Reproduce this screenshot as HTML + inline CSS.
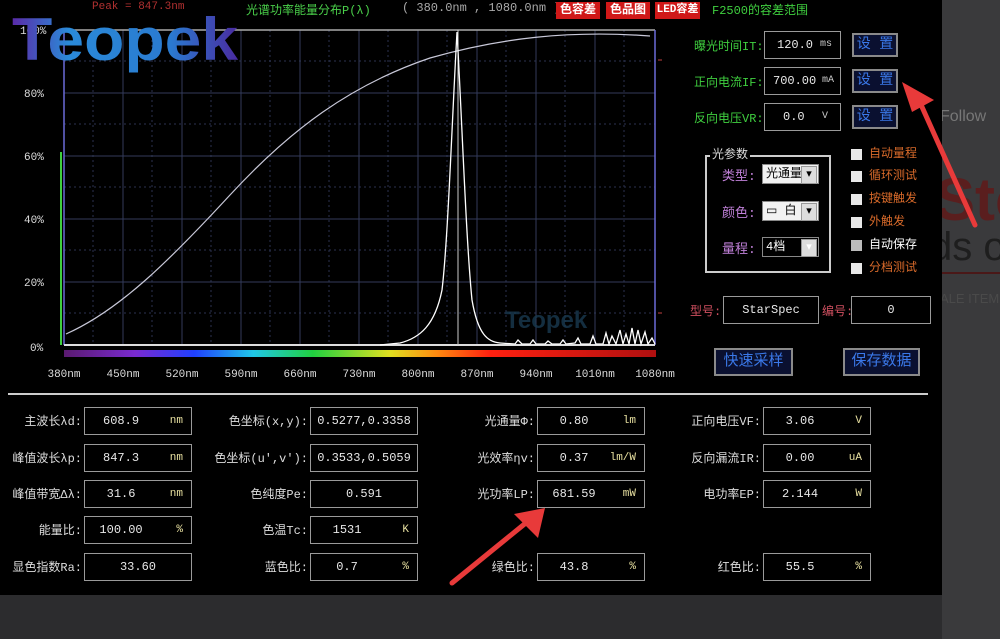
<!DOCTYPE html>
<html><head><meta charset="utf-8"><style>
*{margin:0;padding:0;box-sizing:border-box}
body{width:1000px;height:639px;background:#2c2c2e;position:relative;overflow:hidden;font-family:"Liberation Mono","Noto Sans CJK SC",monospace;font-size:12px}
.a{position:absolute;white-space:nowrap}
.panel{position:absolute;left:0;top:0;width:942px;height:595px;background:#000}
.lbl{position:absolute;color:#ddd;text-align:right;font-size:12px;line-height:16px}
.box{position:absolute;border:1.5px solid #9a9a9a;height:28px;color:#e8e8e8;font-size:12px;line-height:26px}
.box .v{position:absolute;left:0;top:0;width:68%;text-align:center}
.box .u{position:absolute;right:8px;top:0;color:#e8e0a0;font-size:11px}
.set{position:absolute;width:46px;height:24px;border:2px solid #8a8a8a;background:#0a1030;color:#3a78e8;font-size:14px;line-height:20px;text-align:center;white-space:nowrap}
.g{color:#3fcf3f}
.cb{position:absolute;width:11px;height:11px;background:#e8e8e8}
.cbl{position:absolute;color:#d86a2a;font-size:12px;line-height:14px}
.combo{position:absolute;width:57px;height:20px;background:#f2f2f2;color:#000;font-size:12px;line-height:19px;padding-left:3px;border:1px solid #888}
.combo:after{content:"▾";position:absolute;right:1px;top:1px;width:14px;height:16px;background:#ddd;font-size:11px;line-height:16px;text-align:center;border:1px solid #999}
.pl{position:absolute;color:#c080d8;font-size:13px}
</style></head><body>
<div class="a" style="left:942px;top:0;width:58px;height:639px;background:#3a3a3c"></div>
<div class="a" style="left:940px;top:108px;color:#777;font-family:'Liberation Sans',sans-serif;font-size:16px">Follow</div>
<div class="a" style="left:935px;top:165px;color:#5a1e1e;font-family:'Liberation Sans',sans-serif;font-size:60px;font-weight:bold">Sto</div>
<div class="a" style="left:930px;top:225px;color:#1e1e1e;font-family:'Liberation Sans',sans-serif;font-size:40px">ds o</div>
<div class="a" style="left:940px;top:272px;width:60px;height:2px;background:#4a1818"></div>
<div class="a" style="left:940px;top:291px;color:#4a4a4a;font-family:'Liberation Sans',sans-serif;font-size:13px">ALE ITEM</div>
<div class="panel"></div>
<!-- header -->
<div class="a" style="left:92px;top:1px;color:#b03030;font-size:11px">Peak = 847.3nm</div>
<div class="a g" style="left:246px;top:1px;font-size:12px;color:#4ad04a">光谱功率能量分布P(λ)</div>
<div class="a" style="left:402px;top:1px;color:#aaa;font-size:12px">( 380.0nm , 1080.0nm )</div>
<div class="a" style="left:556px;top:2px;width:44px;height:17px;background:#d01818;color:#fff;font-size:12px;line-height:17px;text-align:center;font-weight:bold">色容差</div>
<div class="a" style="left:606px;top:2px;width:44px;height:17px;background:#d01818;color:#fff;font-size:12px;line-height:17px;text-align:center;font-weight:bold">色品图</div>
<div class="a" style="left:655px;top:2px;width:45px;height:17px;background:#d01818;color:#fff;font-size:11px;line-height:17px;text-align:center;font-weight:bold">LED容差</div>
<div class="a g" style="left:712px;top:1px;font-size:12px">F2500的容差范围</div>
<!-- chart -->
<svg class="a" style="left:0;top:0" width="700" height="390">
<defs><linearGradient id="sp" x1="0" x2="1"><stop offset="0" stop-color="#5a1a70"/><stop offset=".12" stop-color="#7a2ad0"/><stop offset=".22" stop-color="#2040ff"/><stop offset=".32" stop-color="#20c8e8"/><stop offset=".42" stop-color="#20d040"/><stop offset=".55" stop-color="#e0e020"/><stop offset=".63" stop-color="#ff8a10"/><stop offset=".72" stop-color="#ff2010"/><stop offset="1" stop-color="#b01010"/></linearGradient></defs>
<g stroke="#2c3250" stroke-width="1" stroke-dasharray="2,3">
<line x1="64" y1="61" x2="655" y2="61"/><line x1="64" y1="124" x2="655" y2="124"/><line x1="64" y1="187" x2="655" y2="187"/><line x1="64" y1="250" x2="655" y2="250"/><line x1="64" y1="313" x2="655" y2="313"/>
<line x1="93" y1="30" x2="93" y2="345"/><line x1="152" y1="30" x2="152" y2="345"/><line x1="211" y1="30" x2="211" y2="345"/><line x1="270" y1="30" x2="270" y2="345"/><line x1="329" y1="30" x2="329" y2="345"/><line x1="388" y1="30" x2="388" y2="345"/><line x1="447" y1="30" x2="447" y2="345"/><line x1="506" y1="30" x2="506" y2="345"/><line x1="565" y1="30" x2="565" y2="345"/><line x1="624" y1="30" x2="624" y2="345"/>
</g>
<g stroke="#333a5a" stroke-width="1">
<line x1="64" y1="93" x2="655" y2="93"/><line x1="64" y1="156" x2="655" y2="156"/><line x1="64" y1="219" x2="655" y2="219"/><line x1="64" y1="282" x2="655" y2="282"/>
<line x1="123" y1="30" x2="123" y2="345"/><line x1="182" y1="30" x2="182" y2="345"/><line x1="241" y1="30" x2="241" y2="345"/><line x1="300" y1="30" x2="300" y2="345"/><line x1="359" y1="30" x2="359" y2="345"/><line x1="418" y1="30" x2="418" y2="345"/><line x1="477" y1="30" x2="477" y2="345"/><line x1="536" y1="30" x2="536" y2="345"/><line x1="595" y1="30" x2="595" y2="345"/>
</g>
<line x1="64" y1="30" x2="655" y2="30" stroke="#aaa" stroke-width="1.5"/>
<line x1="64" y1="30" x2="64" y2="345" stroke="#6a6ad8" stroke-width="1.5"/>
<line x1="655" y1="30" x2="655" y2="345" stroke="#6a6ad8" stroke-width="1.5"/>
<line x1="61" y1="152" x2="61" y2="345" stroke="#3fcf3f" stroke-width="2"/>
<line x1="64" y1="345" x2="655" y2="345" stroke="#ddd" stroke-width="2"/>
<line x1="458" y1="30" x2="458" y2="345" stroke="#ccc" stroke-width="1"/>
<line x1="658" y1="60" x2="662" y2="60" stroke="#c04040"/><line x1="658" y1="313" x2="662" y2="313" stroke="#c04040"/>
<path d="M66,334 C120,310 170,260 230,195 C290,130 350,85 430,58 C500,38 570,30 650,36" fill="none" stroke="#c8c8d8" stroke-width="1.2"/>
<path d="M380,345 L400,343 C420,338 435,325 442,290 C448,240 452,120 457,32 C462,120 466,240 472,300 C478,335 488,342 500,343 L515,344 518,340 522,344 530,344 533,340 536,344 545,344 548,341 552,344 560,344 563,340 566,344 575,343 578,338 581,344 590,344 593,336 596,344 603,344 606,333 609,344 612,336 616,344 620,330 623,344 626,334 629,344 632,328 635,344 638,330 641,344 645,332 648,344 652,338 655,344" fill="none" stroke="#fff" stroke-width="1.3"/>
<rect x="64" y="350" width="592" height="7" fill="url(#sp)"/>
<text x="505" y="328" fill="#1a3a50" font-family="Liberation Sans" font-size="24" font-weight="bold" opacity=".8">Teopek</text>
<g fill="#ddd" font-family="Liberation Mono" font-size="11">
<text x="20" y="34">100%</text><text x="24" y="97">80%</text><text x="24" y="160">60%</text><text x="24" y="223">40%</text><text x="24" y="286">20%</text><text x="30" y="351">0%</text>
</g>
<g fill="#ddd" font-family="Liberation Mono" font-size="11" text-anchor="middle">
<text x="64" y="377">380nm</text><text x="123" y="377">450nm</text><text x="182" y="377">520nm</text><text x="241" y="377">590nm</text><text x="300" y="377">660nm</text><text x="359" y="377">730nm</text><text x="418" y="377">800nm</text><text x="477" y="377">870nm</text><text x="536" y="377">940nm</text><text x="595" y="377">1010nm</text><text x="655" y="377">1080nm</text>
</g>
</svg>
<!-- logo -->
<svg class="a" style="left:8px;top:5px" width="240" height="75">
<defs><linearGradient id="lg" x1="0" x2="1"><stop offset="0" stop-color="#5a2aa8"/><stop offset=".25" stop-color="#2a8ad8"/><stop offset=".7" stop-color="#2a7ad0"/><stop offset="1" stop-color="#4a2aa0"/></linearGradient></defs>
<text x="4" y="55" fill="url(#lg)" font-family="Liberation Sans" font-size="60" font-weight="bold" textLength="226" lengthAdjust="spacingAndGlyphs">Teopek</text>
</svg>
<!-- right panel -->
<div class="a g" style="left:694px;top:37px;font-size:12px">曝光时间IT:</div>
<div class="box" style="left:764px;top:31px;width:77px"><span class="a" style="left:12px;color:#e8e8e8">120.0</span><span class="a" style="right:8px;font-size:10px;color:#ccc">ms</span></div>
<div class="set" style="left:852px;top:33px">设 置</div>
<div class="a g" style="left:694px;top:73px;font-size:12px">正向电流IF:</div>
<div class="box" style="left:764px;top:67px;width:77px"><span class="a" style="left:8px">700.00</span><span class="a" style="right:6px;font-size:10px;color:#ccc">mA</span></div>
<div class="set" style="left:852px;top:69px">设 置</div>
<div class="a g" style="left:694px;top:109px;font-size:12px">反向电压VR:</div>
<div class="box" style="left:764px;top:103px;width:77px"><span class="a" style="left:18px">0.0</span><span class="a" style="right:12px;font-size:10px;color:#ccc">V</span></div>
<div class="set" style="left:852px;top:105px">设 置</div>
<div class="a" style="left:705px;top:155px;width:126px;height:118px;border:2px solid #ccc"></div>
<div class="a" style="left:710px;top:145px;background:#000;color:#ddd;padding:0 2px;font-size:12px">光参数</div>
<div class="pl" style="left:722px;top:165px">类型:</div><div class="combo" style="left:762px;top:164px">光通量</div>
<div class="pl" style="left:722px;top:202px">颜色:</div><div class="combo" style="left:762px;top:201px">▭ 白</div>
<div class="pl" style="left:722px;top:238px">量程:</div><div class="combo" style="left:762px;top:237px;background:#000;color:#fff">4档</div>
<div class="cb" style="left:851px;top:149px"></div><div class="cbl" style="left:869px;top:147px">自动量程</div>
<div class="cb" style="left:851px;top:171px"></div><div class="cbl" style="left:869px;top:169px">循环测试</div>
<div class="cb" style="left:851px;top:194px"></div><div class="cbl" style="left:869px;top:192px">按键触发</div>
<div class="cb" style="left:851px;top:217px"></div><div class="cbl" style="left:869px;top:215px">外触发</div>
<div class="cb" style="left:851px;top:240px;background:#bbb"></div><div class="cbl" style="left:869px;top:238px;color:#fff">自动保存</div>
<div class="cb" style="left:851px;top:263px"></div><div class="cbl" style="left:869px;top:261px">分档测试</div>
<div class="a" style="left:690px;top:302px;color:#d05060;font-size:12px">型号:</div>
<div class="box" style="left:723px;top:296px;width:96px;text-align:center">StarSpec</div>
<div class="a" style="left:822px;top:302px;color:#d05060;font-size:12px">编号:</div>
<div class="box" style="left:851px;top:296px;width:80px;text-align:center">0</div>
<div class="set" style="left:714px;top:348px;width:79px;height:28px;line-height:24px;font-size:15px">快速采样</div>
<div class="set" style="left:843px;top:348px;width:77px;height:28px;line-height:24px;font-size:15px">保存数据</div>
<div class="a" style="left:8px;top:393px;width:920px;height:2px;background:#ccc"></div>
<!-- data grid -->
<div class="lbl" style="left:0;width:82px;top:414px">主波长λd:</div>
<div class="box" style="left:84px;top:407px;width:108px"><span class="v">608.9</span><span class="u">nm</span></div>
<div class="lbl" style="left:0;width:82px;top:451px">峰值波长λp:</div>
<div class="box" style="left:84px;top:444px;width:108px"><span class="v">847.3</span><span class="u">nm</span></div>
<div class="lbl" style="left:0;width:82px;top:487px">峰值带宽Δλ:</div>
<div class="box" style="left:84px;top:480px;width:108px"><span class="v">31.6</span><span class="u">nm</span></div>
<div class="lbl" style="left:0;width:82px;top:523px">能量比:</div>
<div class="box" style="left:84px;top:516px;width:108px"><span class="v">100.00</span><span class="u">%</span></div>
<div class="lbl" style="left:0;width:82px;top:560px">显色指数Ra:</div>
<div class="box" style="left:84px;top:553px;width:108px"><span class="v" style="width:100%">33.60</span></div>

<div class="lbl" style="left:180px;width:128px;top:414px">色坐标(x,y):</div>
<div class="box" style="left:310px;top:407px;width:108px;text-align:center">0.5277,0.3358</div>
<div class="lbl" style="left:180px;width:128px;top:451px">色坐标(u',v'):</div>
<div class="box" style="left:310px;top:444px;width:108px;text-align:center">0.3533,0.5059</div>
<div class="lbl" style="left:180px;width:128px;top:487px">色纯度Pe:</div>
<div class="box" style="left:310px;top:480px;width:108px;text-align:center">0.591</div>
<div class="lbl" style="left:180px;width:128px;top:523px">色温Tc:</div>
<div class="box" style="left:310px;top:516px;width:108px"><span class="v">1531</span><span class="u">K</span></div>
<div class="lbl" style="left:180px;width:128px;top:560px">蓝色比:</div>
<div class="box" style="left:310px;top:553px;width:108px"><span class="v">0.7</span><span class="u">%</span></div>

<div class="lbl" style="left:420px;width:115px;top:414px">光通量Φ:</div>
<div class="box" style="left:537px;top:407px;width:108px"><span class="v">0.80</span><span class="u">lm</span></div>
<div class="lbl" style="left:420px;width:115px;top:451px">光效率ηv:</div>
<div class="box" style="left:537px;top:444px;width:108px"><span class="v">0.37</span><span class="u">lm/W</span></div>
<div class="lbl" style="left:420px;width:115px;top:487px">光功率LP:</div>
<div class="box" style="left:537px;top:480px;width:108px"><span class="v">681.59</span><span class="u">mW</span></div>
<div class="lbl" style="left:420px;width:115px;top:560px">绿色比:</div>
<div class="box" style="left:537px;top:553px;width:108px"><span class="v">43.8</span><span class="u">%</span></div>

<div class="lbl" style="left:640px;width:121px;top:414px">正向电压VF:</div>
<div class="box" style="left:763px;top:407px;width:108px"><span class="v">3.06</span><span class="u">V</span></div>
<div class="lbl" style="left:640px;width:121px;top:451px">反向漏流IR:</div>
<div class="box" style="left:763px;top:444px;width:108px"><span class="v">0.00</span><span class="u">uA</span></div>
<div class="lbl" style="left:640px;width:121px;top:487px">电功率EP:</div>
<div class="box" style="left:763px;top:480px;width:108px"><span class="v">2.144</span><span class="u">W</span></div>
<div class="lbl" style="left:640px;width:121px;top:560px">红色比:</div>
<div class="box" style="left:763px;top:553px;width:108px"><span class="v">55.5</span><span class="u">%</span></div>
<!-- arrows -->
<svg class="a" style="left:0;top:0" width="1000" height="639">
<line x1="975" y1="225" x2="918" y2="98" stroke="#e83a3a" stroke-width="5" stroke-linecap="round"/>
<polygon points="902,82 934,100 912,112" fill="#e83a3a"/>
<line x1="452" y1="583" x2="527" y2="522" stroke="#e83a3a" stroke-width="5" stroke-linecap="round"/>
<polygon points="545,508 538,538 514,514" fill="#e83a3a"/>
</svg>
</body></html>
